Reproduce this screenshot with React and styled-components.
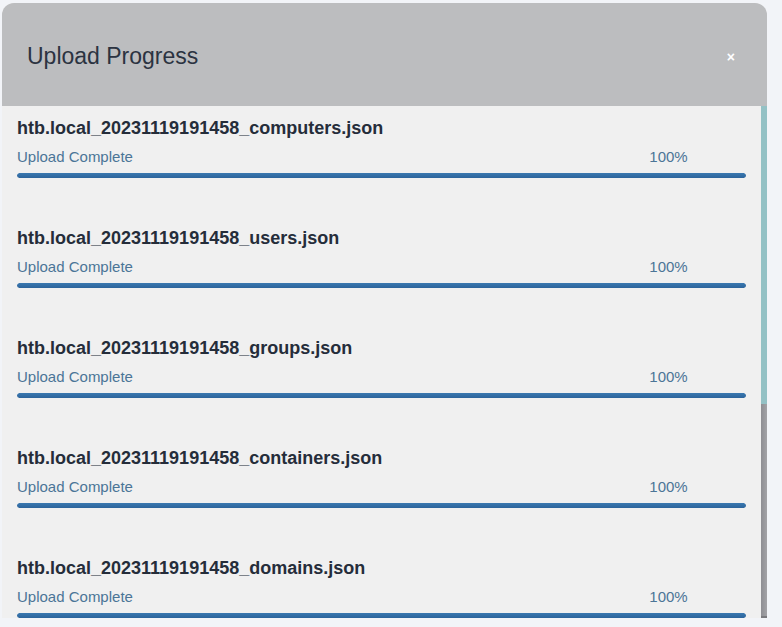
import React from "react";
import styled, { createGlobalStyle } from "styled-components";

const GlobalStyle = createGlobalStyle`
  html, body {
    margin: 0;
    padding: 0;
    background: #f2f4f8;
    font-family: "Liberation Sans", Arial, sans-serif;
  }
`;

const Page = styled.div`
  height: 627px;
  padding: 3px 15px 9px 2px;
  box-sizing: border-box;
  display: flex;
`;

const Modal = styled.div`
  flex: 1;
  display: flex;
  flex-direction: column;
  border-radius: 12px 12px 0 0;
  overflow: hidden;
  background: #f0f0f0;
`;

const Header = styled.div`
  height: 103px;
  flex-shrink: 0;
  background: #bcbdbf;
  display: flex;
  align-items: center;
  justify-content: space-between;
  padding: 0 32px 0 25px;
  box-sizing: border-box;
`;

const Title = styled.h4`
  margin: 0;
  margin-top: 3px;
  font-size: 23px;
  font-weight: 400;
  color: #2b3341;
`;

const Close = styled.button`
  background: none;
  border: none;
  padding: 0;
  margin-top: 5px;
  color: #ffffff;
  font-family: "Liberation Sans", Arial, sans-serif;
  font-size: 14px;
  font-weight: 700;
  cursor: pointer;
`;

const BodyWrap = styled.div`
  flex: 1;
  min-height: 0;
  display: flex;
`;

const Body = styled.div`
  flex: 1;
  overflow: hidden;
`;

const ScrollTrack = styled.div`
  width: 6px;
  flex-shrink: 0;
  background: linear-gradient(90deg, #8e8e93, #a3a3a7);
  display: flex;
  flex-direction: column;
  border-bottom: 2px solid #7a7a7e;
`;

const ScrollThumb = styled.div`
  background: #94c1c5;
`;

const Item = styled.div`
  height: 110px;
  box-sizing: border-box;
  padding: 12px 15px 0 15px;
`;

const FileName = styled.div`
  font-size: 18px;
  font-weight: 700;
  line-height: 20px;
  color: #252d3a;
`;

const StatusRow = styled.div`
  width: 92%;
  display: flex;
  justify-content: space-between;
  margin-top: 9px;
  font-size: 15px;
  line-height: 20px;
  color: #4b7597;
`;

const Bar = styled.div`
  margin-top: 6px;
  height: 5px;
  border-radius: 3px;
  background: #e2e2e2;
  overflow: hidden;
`;

const Fill = styled.div`
  height: 100%;
  background: linear-gradient(#3a78b0, #2c649b);
  border-radius: 3px;
`;

const files = [
  "computers",
  "users",
  "groups",
  "containers",
  "domains",
  "gpos",
  "ous",
  "sessions",
];

export default function App() {
  const visible = 512;
  const total = files.length * 110;
  const thumb = Math.round((visible / total) * visible);

  return (
    <>
      <GlobalStyle />
      <Page>
        <Modal>
          <Header>
            <Title>Upload Progress</Title>
            <Close>×</Close>
          </Header>
          <BodyWrap>
            <Body>
              {files.map((f) => (
                <Item key={f}>
                  <FileName>htb.local_20231119191458_{f}.json</FileName>
                  <StatusRow>
                    <span>Upload Complete</span>
                    <span>100%</span>
                  </StatusRow>
                  <Bar>
                    <Fill style={{ width: "100%" }} />
                  </Bar>
                </Item>
              ))}
            </Body>
            <ScrollTrack>
              <ScrollThumb style={{ height: thumb }} />
            </ScrollTrack>
          </BodyWrap>
        </Modal>
      </Page>
    </>
  );
}
